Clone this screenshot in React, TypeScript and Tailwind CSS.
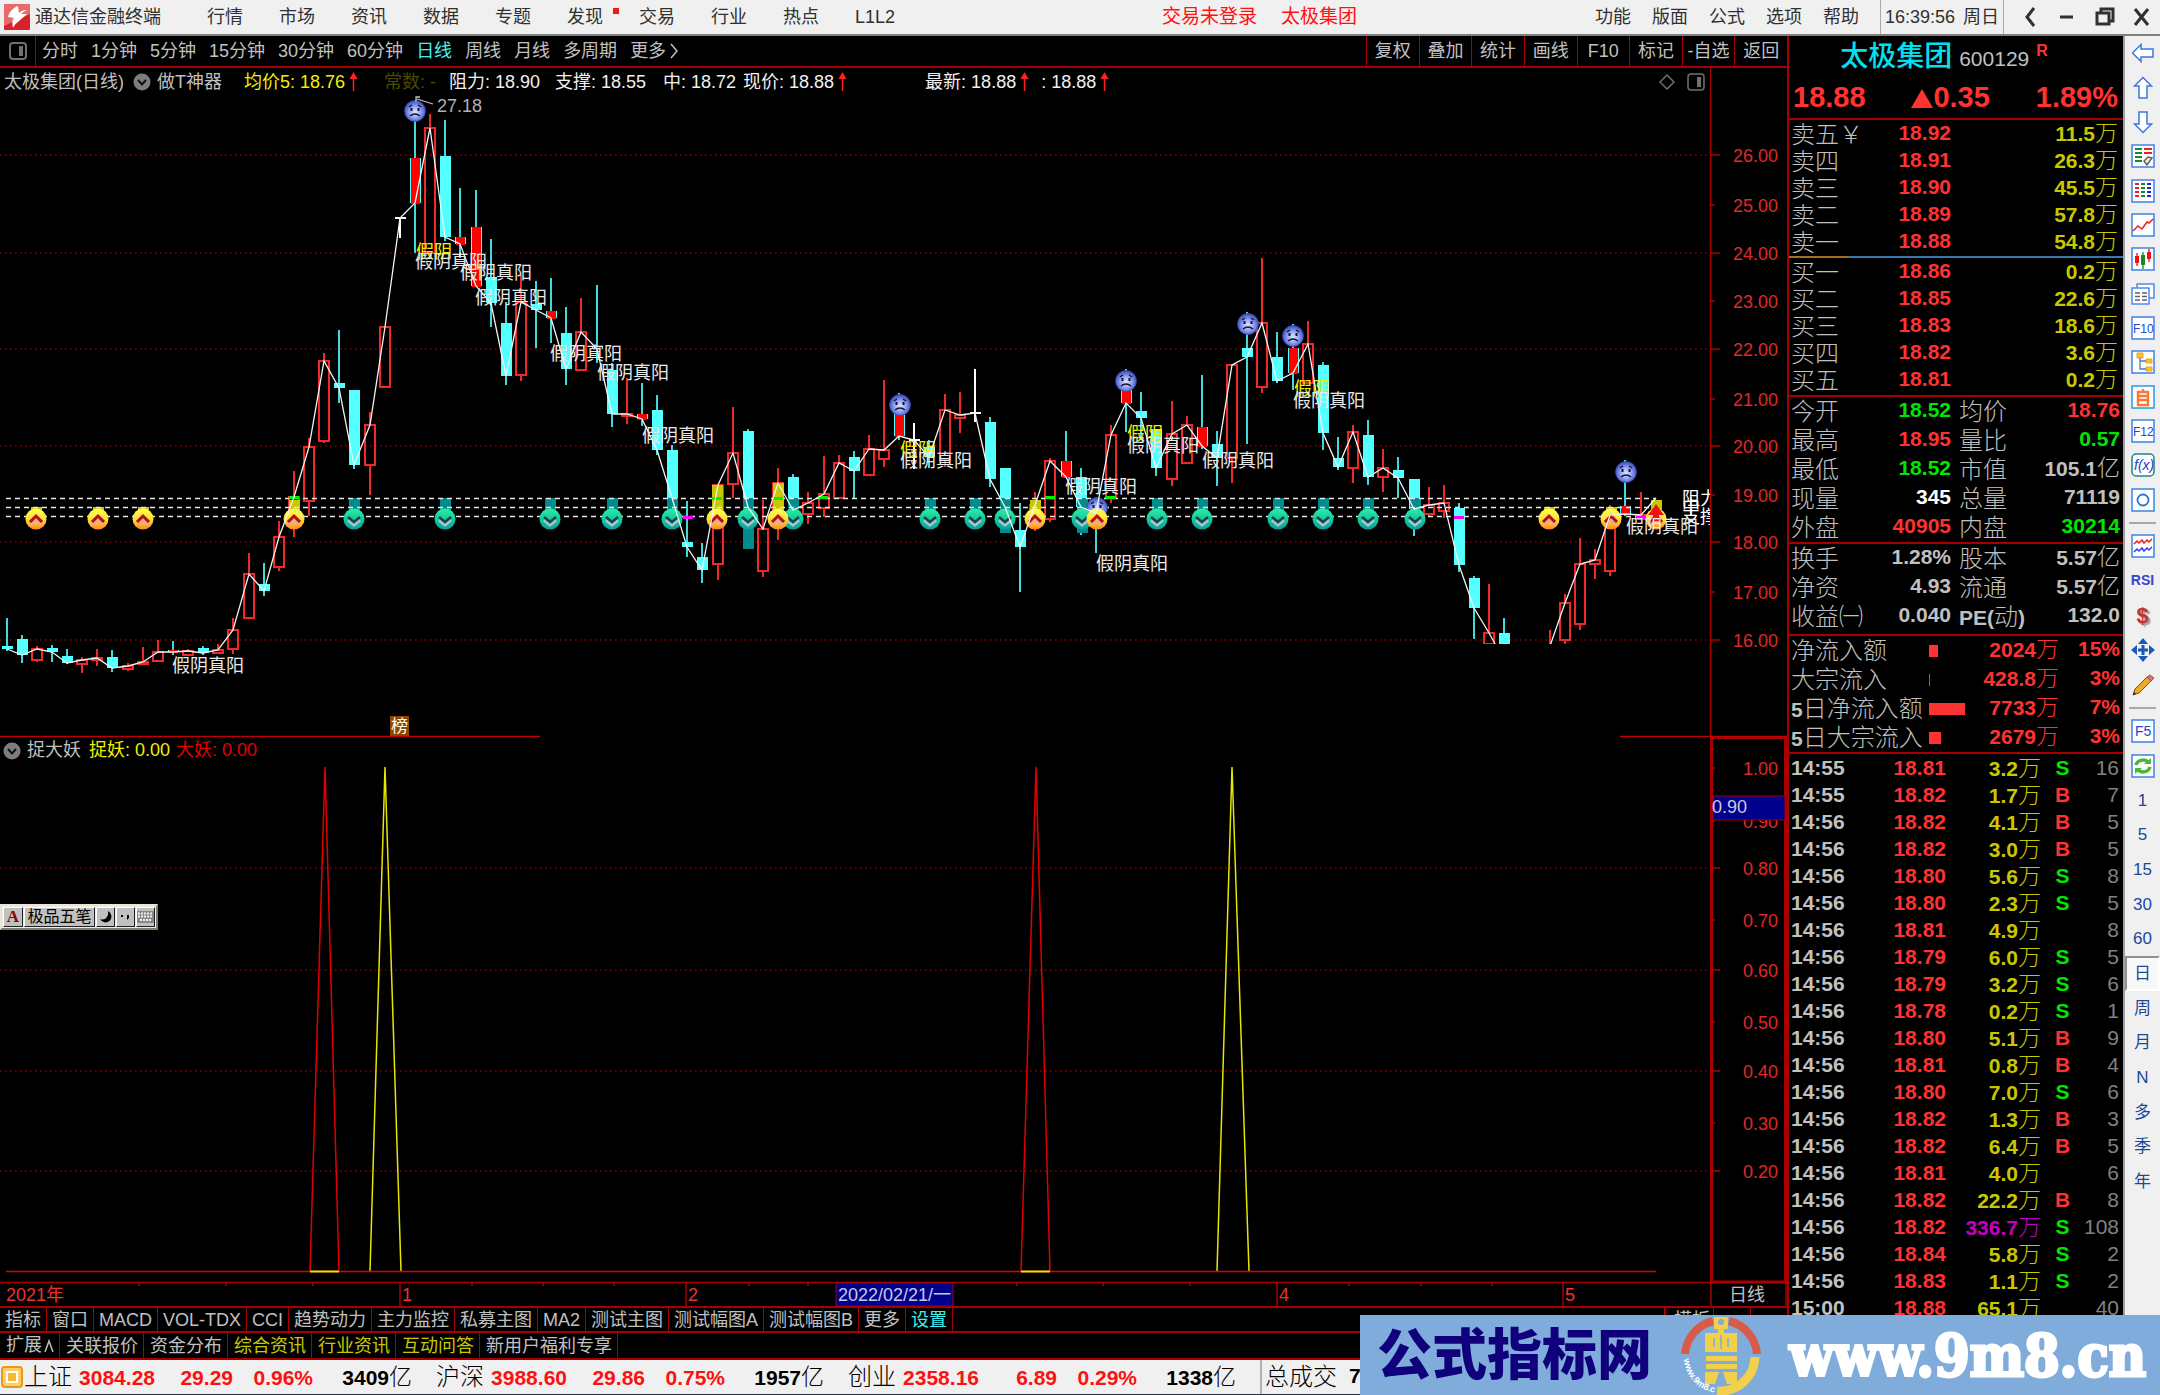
import type { ReactNode } from "react";

type Candle = [kind: string, high: number, top: number, bottom: number, low: number];

const STEP = 15.13;
const cx = (i: number) => Math.round(6.5 + i * STEP);

// r: hollow red, c: cyan, f: red body with cyan wicks, w: white, -: nothing
const candles: Candle[] = [
  ["c", 618, 646, 649, 651], ["c", 635, 639, 655, 663], ["r", 646, 649, 660, 662], ["c", 645, 648, 652, 662],
  ["c", 649, 656, 663, 664], ["r", 657, 660, 664, 673], ["r", 649, 658, 660, 666], ["c", 650, 657, 668, 672],
  ["r", 663, 666, 669, 671], ["r", 647, 662, 663, 664], ["r", 640, 652, 661, 661], ["f", 641, 650, 652, 655],
  ["r", 649, 651, 655, 656], ["c", 646, 648, 653, 655], ["r", 644, 650, 653, 654], ["r", 618, 630, 649, 654],
  ["r", 553, 574, 618, 618], ["c", 563, 584, 591, 596], ["r", 521, 537, 567, 571], ["r", 471, 497, 520, 537],
  ["r", 438, 447, 501, 516], ["r", 353, 361, 441, 443], ["c", 330, 383, 388, 403], ["c", 390, 390, 465, 469],
  ["r", 412, 425, 465, 495], ["r", 327, 327, 387, 387], ["w", 218, 218, 218, 238], ["f", 112, 158, 203, 253],
  ["r", 114, 128, 253, 253], ["c", 120, 156, 237, 241], ["f", 188, 237, 244, 258], ["f", 190, 227, 286, 286],
  ["c", 239, 277, 303, 327], ["c", 302, 323, 376, 385], ["r", 275, 302, 375, 381], ["c", 281, 304, 310, 348],
  ["f", 278, 311, 318, 343], ["c", 307, 333, 369, 385], ["r", 298, 332, 370, 370], ["f", 285, 346, 349, 363],
  ["c", 363, 370, 414, 427], ["r", 378, 414, 415, 424], ["f", 383, 414, 419, 426], ["c", 395, 410, 450, 455],
  ["c", 445, 450, 498, 523], ["c", 501, 542, 547, 557], ["c", 543, 557, 570, 583], ["r", 485, 485, 564, 580],
  ["r", 407, 453, 484, 498], ["c", 429, 431, 507, 549], ["r", 500, 529, 571, 577], ["r", 468, 483, 520, 540],
  ["c", 474, 477, 510, 510], ["r", 492, 503, 514, 524], ["r", 456, 494, 508, 517], ["r", 455, 463, 498, 499],
  ["c", 451, 457, 471, 498], ["r", 435, 449, 475, 475], ["r", 380, 450, 459, 467], ["f", 393, 413, 436, 440],
  ["w", 423, 440, 440, 469], ["c", 440, 447, 457, 468], ["r", 394, 410, 460, 467], ["r", 392, 415, 418, 433],
  ["w", 369, 413, 413, 422], ["c", 417, 422, 479, 487], ["c", 468, 468, 507, 533], ["c", 503, 530, 547, 592],
  ["r", 492, 505, 520, 531], ["r", 458, 461, 519, 522], ["f", 431, 461, 477, 477], ["c", 468, 477, 507, 535],
  ["c", 513, 513, 513, 553], ["r", 425, 435, 497, 503], ["f", 369, 387, 403, 432], ["c", 392, 411, 418, 440],
  ["c", 429, 429, 468, 476], ["r", 401, 434, 479, 486], ["r", 416, 425, 463, 464], ["f", 375, 427, 446, 449],
  ["c", 431, 444, 458, 486], ["r", 365, 365, 458, 483], ["c", 312, 348, 357, 444], ["r", 258, 323, 387, 393],
  ["c", 332, 357, 381, 383], ["f", 324, 348, 373, 390], ["r", 321, 344, 383, 383], ["c", 362, 365, 433, 450],
  ["c", 437, 458, 467, 470], ["r", 425, 432, 468, 483], ["c", 420, 435, 477, 485], ["r", 449, 468, 477, 492],
  ["c", 457, 470, 478, 498], ["c", 479, 479, 509, 536], ["r", 487, 505, 514, 516], ["r", 485, 503, 511, 518],
  ["c", 503, 508, 565, 572], ["c", 576, 578, 608, 639], ["r", 584, 633, 644, 644], ["c", 618, 633, 660, 660],
  ["-", 0, 0, 662, 0], ["-", 0, 0, 662, 0], ["r", 630, 646, 662, 662], ["r", 594, 603, 640, 644],
  ["r", 538, 564, 624, 630], ["r", 549, 560, 564, 579], ["r", 505, 515, 571, 576], ["f", 460, 506, 514, 516],
  ["r", 492, 515, 519, 519], ["-", 0, 0, 498, 0],
];

const closeLine = candles
  .map(([kind, , top, bottom], i) => `${cx(i)},${kind === "r" || kind === "w" ? top : bottom}`)
  .join(" ");

const buyMarks = [36, 98, 143, 294, 717, 778, 1035, 1097, 1549, 1611, 1656];
const sellMarks = [354, 445, 550, 612, 672, 748, 793, 930, 975, 1005, 1082, 1157, 1202, 1278, 1323, 1368, 1415];
const sadMarks = [[415, 111], [900, 405], [1126, 381], [1248, 324], [1293, 336], [1626, 472], [1097, 508]];
const fakeLabels = [
  [415, 261], [460, 272], [475, 297], [550, 353], [597, 372], [642, 435], [172, 665],
  [900, 460], [1065, 486], [1127, 445], [1202, 460], [1293, 400], [1096, 563], [1626, 526],
];
const yellowLabels = [[416, 251], [900, 449], [1127, 433], [1294, 388]];
// x, top, height, colour
const stubs: [number, number, number, string][] = [
  [294, 500, 12, "#c8c800"], [717, 485, 25, "#c8c800"], [778, 483, 27, "#c8c800"], [1035, 500, 12, "#c8c800"],
  [1656, 500, 12, "#c8c800"], [36, 507, 4, "#c8c800"], [98, 507, 4, "#c8c800"], [143, 507, 4, "#c8c800"],
  [1549, 507, 4, "#c8c800"], [1611, 507, 4, "#c8c800"],
  [748, 507, 42, "#008c8c"], [1005, 507, 26, "#008c8c"], [1082, 507, 26, "#008c8c"],
];
const flashes: [number, number, string][] = [
  [294, 497, "#00f000"], [717, 498, "#00f000"], [778, 498, "#00f000"], [823, 497, "#00f000"],
  [1050, 497, "#00f000"], [1111, 497, "#00f000"], [688, 517, "#ff00ff"], [1459, 517, "#ff00ff"], [1641, 517, "#ff00ff"],
];

const priceAxis: [string, number, boolean][] = [
  ["26.00", 155, true], ["25.00", 205, false], ["24.00", 253, true], ["23.00", 301, false],
  ["22.00", 349, true], ["21.00", 399, false], ["20.00", 446, true], ["19.00", 495, false],
  ["18.00", 542, true], ["17.00", 592, false], ["16.00", 640, true],
];
const subAxis: [string, number, boolean][] = [
  ["1.00", 768, false], ["0.90", 821, false], ["0.80", 868, true], ["0.70", 920, false], ["0.60", 970, true],
  ["0.50", 1022, false], ["0.40", 1071, true], ["0.30", 1123, false], ["0.20", 1171, true],
];
const spikes: [number, number, number, string][] = [
  [310, 325, 339, "#e00000"], [370, 385, 401, "#e6e600"], [1021, 1036, 1050, "#e00000"], [1217, 1232, 1249, "#e6e600"],
];
const dayTicks = [139, 226, 313, 472, 543, 614, 749, 808, 1017, 1103, 1190, 1349, 1421, 1492];
const monthTicks: [number, string][] = [[400, "1"], [686, "2"], [1277, "4"], [1563, "5"]];

const menus = ["行情", "市场", "资讯", "数据", "专题", "发现", "交易", "行业", "热点", "L1L2"];
const rightMenus = ["功能", "版面", "公式", "选项", "帮助"];
const periods = ["分时", "1分钟", "5分钟", "15分钟", "30分钟", "60分钟", "日线", "周线", "月线", "多周期"];
const tools = ["复权", "叠加", "统计", "画线", "F10", "标记", "-自选", "返回"];
const tabs = ["指标", "窗口", "MACD", "VOL-TDX", "CCI", "趋势动力", "主力监控", "私募主图", "MA2", "测试主图", "测试幅图A", "测试幅图B", "更多", "设置"];
const links = ["关联报价", "资金分布", "综合资讯", "行业资讯", "互动问答", "新用户福利专享"];

const asks = [["卖五￥", "18.92", "11.5万"], ["卖四", "18.91", "26.3万"], ["卖三", "18.90", "45.5万"], ["卖二", "18.89", "57.8万"], ["卖一", "18.88", "54.8万"]];
const bids = [["买一", "18.86", "0.2万"], ["买二", "18.85", "22.6万"], ["买三", "18.83", "18.6万"], ["买四", "18.82", "3.6万"], ["买五", "18.81", "0.2万"]];

const RED = "text-[#ff3232]";
const GREEN = "text-[#00e600]";
const GRAY = "text-[#c0c0c0]";
const stats = [
  ["今开", "18.52", GREEN, "均价", "18.76", RED],
  ["最高", "18.95", RED, "量比", "0.57", GREEN],
  ["最低", "18.52", GREEN, "市值", "105.1亿", GRAY],
  ["现量", "345", "text-white", "总量", "71119", GRAY],
  ["外盘", "40905", RED, "内盘", "30214", GREEN],
];
const stats2 = [
  ["换手", "1.28%", GRAY, "股本", "5.57亿", GRAY],
  ["净资", "4.93", GRAY, "流通", "5.57亿", GRAY],
  ["收益㈠", "0.040", GRAY, "PE(动)", "132.0", GRAY],
];
const flows: [string, number, string, string][] = [
  ["净流入额", 9, "2024万", "15%"], ["大宗流入", 1, "428.8万", "3%"],
  ["5日净流入额", 36, "7733万", "7%"], ["5日大宗流入", 12, "2679万", "3%"],
];
const ticks = `14:55 18.81 3.2万 S 16
14:55 18.82 1.7万 B 7
14:56 18.82 4.1万 B 5
14:56 18.82 3.0万 B 5
14:56 18.80 5.6万 S 8
14:56 18.80 2.3万 S 5
14:56 18.81 4.9万 - 8
14:56 18.79 6.0万 S 5
14:56 18.79 3.2万 S 6
14:56 18.78 0.2万 S 1
14:56 18.80 5.1万 B 9
14:56 18.81 0.8万 B 4
14:56 18.80 7.0万 S 6
14:56 18.82 1.3万 B 3
14:56 18.82 6.4万 B 5
14:56 18.81 4.0万 - 6
14:56 18.82 22.2万 B 8
14:56 18.82 336.7万 S 108
14:56 18.84 5.8万 S 2
14:56 18.83 1.1万 S 2
15:00 18.88 65.1万 - 40`.split("\n").map((l) => l.split(" "));

const indices = [
  ["上证", "3084.28", "29.29", "0.96%", "3409亿"],
  ["沪深", "3988.60", "29.86", "0.75%", "1957亿"],
  ["创业", "2358.16", "6.89", "0.29%", "1338亿"],
];

// bold figure followed by a lighter, larger unit
function Num({ v }: { v: string }) {
  const unit = /[万亿]$/.test(v) ? v.slice(-1) : "";
  return (
    <>
      <span className="text-[21px] leading-none font-bold">{unit ? v.slice(0, -1) : v}</span>
      {unit && <span className="text-[23px] leading-none font-light">{unit}</span>}
    </>
  );
}

function UpArrow() {
  return (
    <svg width="9" height="20" viewBox="0 0 9 20" className="shrink-0">
      <path d="M4.5 2V19" stroke="#ff2020" strokeWidth="1.5" />
      <path d="M4.5 0L8.5 7H.5Z" fill="#ff2020" />
    </svg>
  );
}

function Expander() {
  return (
    <svg width="18" height="18" viewBox="0 0 18 18" className="shrink-0">
      <circle cx="9" cy="9" r="8.500" fill="#7d7d7d" />
      <path d="M5 7l4 4.500 4-4.500" fill="none" stroke="#111" strokeWidth="2" />
    </svg>
  );
}

function TopBar() {
  return (
    <header className="flex h-9 items-center border-b-2 border-[#808080] bg-[#f0f0f0] text-[18px] text-[#303030]">
      <svg width="26" height="26" viewBox="0 0 26 26" className="ml-1 shrink-0">
        <rect width="26" height="26" rx="1" fill="#d8222a" />
        <path d="M0 0h26v10L0 22z" fill="#ea6a6c" />
        <path d="M14 2c-5 2-9 6-10 11l6 1c-2 2-2 6-1 10 2-5 8-8 14-14l-6 0c2-2 4-3 6-4-4 0-6 1-8 3z" fill="#fff" />
      </svg>
      <span className="ml-[5px]">通达信金融终端</span>
      <nav className="ml-[46px] flex gap-9">
        {menus.map((m) => (
          <button key={m} className="relative whitespace-nowrap">
            {m}
            {m === "发现" && <i className="absolute top-1 -right-4 h-[6px] w-[6px] bg-[#f01818]" />}
          </button>
        ))}
      </nav>
      <div className="ml-auto flex items-center">
        <div className="mr-[238px] flex gap-6 text-[19px] text-[#ff1010]">
          <button>交易未登录</button>
          <button>太极集团</button>
        </div>
        <nav className="flex gap-[21px] pr-[21px]">
          {rightMenus.map((m) => <button key={m}>{m}</button>)}
        </nav>
        <time className="flex h-[34px] items-center gap-2 border-x border-[#a8a8a8] px-1">
          <span>16:39:56</span><span>周日</span>
        </time>
        <svg width="156" height="34" viewBox="2004 0 156 34" fill="none" stroke="#303030" strokeWidth="3">
          <path d="M2034 8l-7 9 7 9M2060 17h13M2135 9l13 16M2148 9l-13 16" />
          <path d="M2097 13h12v11h-12zM2101 12v-3h12v12h-3" />
        </svg>
      </div>
    </header>
  );
}

function PeriodBar() {
  return (
    <div className="flex h-8 items-stretch border-b-2 border-[#a80000] text-[18px] text-[#c0c0c0]">
      <button aria-label="侧栏" className="flex w-9 items-center justify-center border-r border-[#a80000]">
        <svg width="18" height="18" viewBox="0 0 18 18" fill="none" stroke="#707070" strokeWidth="2">
          <rect x="1" y="1" width="16" height="16" rx="3" /><path d="M12 4v10" strokeWidth="4" />
        </svg>
      </button>
      <nav className="ml-[6px] flex items-center gap-[13px]">
        {periods.map((p) => (
          <button key={p} className={p === "日线" ? "text-[#40f0f0]" : ""}>{p}</button>
        ))}
        <button className="flex items-center gap-1">
          更多
          <svg width="8" height="16" viewBox="0 0 8 16" fill="none" stroke="#c0c0c0" strokeWidth="1.500"><path d="M1 1l6 7-6 7" /></svg>
        </button>
      </nav>
      <div className="ml-auto grid w-[421px] grid-cols-8">
        {tools.map((t) => (
          <button key={t} className="border-l border-[#a80000] whitespace-nowrap">{t}</button>
        ))}
      </div>
    </div>
  );
}

function ChartHeader() {
  return (
    <div className="flex h-7 items-stretch text-[18px] whitespace-nowrap text-[#f0f0f0]">
      <div className="flex flex-1 items-center pl-1">
        <span className="w-[129px] text-[#c0c0c0]">太极集团(日线)</span>
        <Expander />
        <span className="ml-[6px] w-[87px] text-[#c0c0c0]">做T神器</span>
        <span className="mr-1 text-[#f0f000]">均价5: 18.76</span>
        <UpArrow />
        <span className="ml-[26px] w-[65px] text-[#4a4a00]">常数: -</span>
        <span className="w-[106px]">阻力: 18.90</span>
        <span className="w-[108px]">支撑: 18.55</span>
        <span className="w-20">中: 18.72</span>
        <span className="mr-1">现价: 18.88</span>
        <UpArrow />
        <span className="mr-1 ml-[78px]">最新: 18.88</span>
        <UpArrow />
        <span className="mr-1 ml-3">: 18.88</span>
        <UpArrow />
        <svg width="46" height="18" viewBox="0 0 46 18" className="mr-[5px] ml-auto" fill="none" stroke="#707070" strokeWidth="1.500">
          <path d="M8 2l7 7-7 7-7-7z" /><rect x="29" y="1" width="16" height="16" rx="3" /><path d="M40 4v10" strokeWidth="4" />
        </svg>
      </div>
      <div className="w-[77px] border-l border-[#a80000]" />
    </div>
  );
}

function Sad({ x, y }: { x: number; y: number }) {
  return (
    <g transform={`translate(${x} ${y})`}>
      <circle r="10.500" fill="url(#sad)" stroke="#3848a8" strokeWidth=".8" />
      <path d="M-6-4l3-2M6-4l-3-2M-5 5q5-4 10 0" fill="none" stroke="#10142e" strokeWidth="1.400" />
      <path d="M-3.500-3v3M3.500-3v3" stroke="#10142e" strokeWidth="2" />
    </g>
  );
}

function Body({ c, i }: { c: Candle; i: number }) {
  const [kind, high, top, bottom, low] = c;
  const x = cx(i);
  const h = Math.max(bottom - top, 2);
  if (kind === "-") return null;
  if (kind === "w") return <path d={`M${x} ${high}V${low}M${x - 5} ${top}h11`} stroke="#fff" strokeWidth="1.500" fill="none" />;
  if (kind === "r")
    return (
      <g stroke="#f02828" strokeWidth="1.300" fill="none">
        <path d={`M${x} ${high}V${top}M${x} ${bottom}V${low}`} />
        <rect x={x - 5} y={top} width="10" height={h} />
      </g>
    );
  return (
    <g>
      <path d={`M${x} ${high}V${low}`} stroke="#40d8d8" strokeWidth="1.500" />
      <rect x={x - 5} y={top} width="11" height={h} fill="#54ffff" />
      {kind === "f" && <rect x={x - 4} y={top} width="9" height={h + 1} fill="#ff0000" />}
    </g>
  );
}

function PriceChart() {
  return (
    <svg viewBox="0 96 1787 641" className="block h-auto w-full" fontSize="18">
      <defs>
        <radialGradient id="sad" cx=".5" cy=".55"><stop offset="0" stopColor="#dfe4ff" /><stop offset=".5" stopColor="#9aa8f4" /><stop offset="1" stopColor="#4658c8" /></radialGradient>
        <linearGradient id="buy" x2="0" y2="1"><stop offset="0" stopColor="#ffff50" /><stop offset=".5" stopColor="#ffe040" /><stop offset="1" stopColor="#ff8a10" /></linearGradient>
        <linearGradient id="sell" x2="0" y2="1"><stop offset="0" stopColor="#28f0a0" /><stop offset="1" stopColor="#08a0a0" /></linearGradient>
        <clipPath id="plot"><path d="M0 96H1710V644H1440V737H0Z" /></clipPath>
        <clipPath id="wide"><rect x="0" y="96" width="1710" height="641" /></clipPath>
      </defs>
      {priceAxis.map(([label, y, major]) => (
        <g key={label}>
          {major && <path d={`M0 ${y}H1711`} stroke="#900000" strokeWidth="1.500" strokeDasharray="1.500 3.500" />}
          <path d={`M1711 ${y}h${major ? 9 : 4}`} stroke="#a80000" strokeWidth="1.500" />
          <text x="1778" y={y + 7} textAnchor="end" fill="#e02828">{label}</text>
        </g>
      ))}
      <path d="M1710.500 96V737" stroke="#a80000" strokeWidth="1.500" />
      <g clipPath="url(#plot)">
        <g shapeRendering="crispEdges">{candles.map((c, i) => <Body key={i} c={c} i={i} />)}</g>
      </g>
      <g clipPath="url(#wide)">
        {sellMarks.map((x) => <rect key={x} x={x - 5} y="498" width="11" height="14" fill="#008c8c" />)}
        {stubs.map(([x, y, h, fill]) => <rect key={`${x}`} x={x - 5} y={y} width="11" height={h} fill={fill} />)}
        <path d="M6 498.500H1656M6 507.500H1656M6 516.500H1656" stroke="#e8e8e8" strokeWidth="1.500" strokeDasharray="5 4" />
        {sadMarks.map(([x, y]) => <Sad key={x} x={x} y={y} />)}
        {sellMarks.map((x) => (
          <g key={x} transform={`translate(${x} 519)`}>
            <circle r="10.500" fill="url(#sell)" />
            <path d="M-6-1l6 5 6-5" fill="none" stroke="#a8c8c8" strokeWidth="3" transform="translate(0 2)" />
            <path d="M-6-2l6 5 6-5" fill="none" stroke="#104850" strokeWidth="2.600" />
          </g>
        ))}
        {buyMarks.map((x) => (
          <g key={x} transform={`translate(${x} 519)`}>
            <circle r="10.500" fill="url(#buy)" />
            <path d="M-6 4l6-5 6 5" fill="none" stroke="#f0a890" strokeWidth="3" transform="translate(0 2)" />
            <path d="M-6 3l6-6 6 6" fill="none" stroke="#b01010" strokeWidth="3" />
          </g>
        ))}
        {flashes.map(([x, y, fill]) => <rect key={x} x={x - 5} y={y - 1} width="10" height="3" fill={fill} />)}
        {yellowLabels.map(([x, y]) => <text key={x} x={x} y={y + 7} fill="#f0f000">假阴</text>)}
        <text x="1682" y="505" fill="#fff">阻力</text>
        <text x="1682" y="513" fill="#fff">中</text>
        <text x="1682" y="523" fill="#fff">支撑</text>
      </g>
      <polyline points={closeLine} fill="none" stroke="#f4f4f4" strokeWidth="1.300" clipPath="url(#plot)" />
      <path d="M1656 504l8 11h-5v6h-6v-6h-5z" fill="#f01010" />
      <g fill="#e8e8e8">
        {fakeLabels.map(([x, y]) => <text key={x} x={x} y={y + 7}>假阴真阳</text>)}
      </g>
      <path d="M420 97h-4v5M417 99l16 5" stroke="#c0c0c0" strokeWidth="1.300" fill="none" />
      <text x="437" y="112" fill="#b0b0b0">27.18</text>
      <rect x="390" y="716" width="19" height="20" fill="#8c4600" />
      <text x="391" y="732" fontSize="17" fill="#fff">榜</text>
      <path d="M0 736.500H540M1620 736.500H1787" stroke="#c00000" strokeWidth="1.500" />
    </svg>
  );
}

function SubHeader() {
  return (
    <div className="flex h-[27px] items-stretch text-[18px]">
      <div className="flex flex-1 items-center pl-[3px]">
        <Expander />
        <span className="ml-[6px] text-[#c0c0c0]">捉大妖</span>
        <span className="ml-2 text-[#f0f000]">捉妖: 0.00</span>
        <span className="ml-[6px] text-[#e00000]">大妖: 0.00</span>
      </div>
      <div className="w-[77px] border-x-3 border-t-2 border-[#a80000]" />
    </div>
  );
}

function SubChart() {
  return (
    <svg viewBox="0 764 1787 542" className="block h-auto w-full overflow-visible" fontSize="18">
      {subAxis.map(([label, y, major]) => (
        <g key={label}>
          {major && <path d={`M0 ${y}H1710`} stroke="#900000" strokeWidth="1.500" strokeDasharray="1.500 3.500" />}
          <path d={`M1711 ${y}h${major ? 9 : 4}`} stroke="#a80000" strokeWidth="1.500" />
          <text x="1778" y={y + 7} textAnchor="end" fill="#e02828">{label}</text>
        </g>
      ))}
      <path d="M1711.500 764V1282H1785.500V764" fill="none" stroke="#a80000" strokeWidth="3" />
      <rect x="1713" y="796" width="72" height="24" fill="#00008c" stroke="#a80000" />
      <text x="1712" y="813" fill="#c8c8e0">0.90</text>
      {spikes.map(([l, x, r, stroke]) => (
        <polyline key={x} points={`${l},1271 ${x},767 ${r},1271`} fill="none" stroke={stroke} strokeWidth="1.500" />
      ))}
      <path d="M6 1271.500H1656" stroke="#e00000" strokeWidth="1.500" />
      <path d="M310 1271.500h29M1021 1271.500h29" stroke="#e6e600" strokeWidth="2" />
      <path d="M0 1282.500H1787M1711 1282v24M1786 1282v24" stroke="#a80000" strokeWidth="1.500" />
      {dayTicks.map((x) => <path key={x} d={`M${x} 1282v4`} stroke="#a80000" strokeWidth="1.500" />)}
      {monthTicks.map(([x, label]) => (
        <g key={x}>
          <path d={`M${x} 1282v24`} stroke="#a80000" strokeWidth="1.500" />
          <text x={x + 2} y="1301" fill="#f03030">{label}</text>
        </g>
      ))}
      <text x="6" y="1301" fill="#f03030">2021年</text>
      <rect x="836" y="1283" width="117" height="23" fill="#00008c" stroke="#a80000" />
      <text x="838" y="1301" fill="#c8c8e0">2022/02/21/一</text>
      <text x="1729" y="1301" fill="#c0c0c0">日线</text>
    </svg>
  );
}

function BottomTabs() {
  return (
    <div className="text-[18px] whitespace-nowrap text-[#c0c0c0]">
      <div className="flex h-[25px] border-t-2 border-[#a80000]">
        {tabs.map((t) => (
          <button key={t} className={`border-r border-[#a80000] px-[5px] leading-[24px] ${t === "设置" ? "text-[#40f0f0]" : ""}`}>{t}</button>
        ))}
        <div className="ml-auto flex w-[123px]">
          <button className="w-[47px] flex-1 border-l-2 border-[#a80000] px-2 text-left leading-[24px]">模板</button>
          <button className="w-[37px] border-l border-[#a80000] leading-[24px]">+</button>
          <button className="w-[37px] border-l border-[#a80000] leading-[24px]">-</button>
        </div>
      </div>
      <div className="flex h-[29px] border-y-2 border-[#a80000]">
        <button className="flex items-center border-r border-[#a80000] pr-[5px] pl-[6px]">
          扩展
          <svg width="10" height="14" viewBox="0 0 10 14" fill="none" stroke="#c0c0c0" strokeWidth="1.500" className="ml-[2px]"><path d="M1 13L5 2l4 11" /></svg>
        </button>
        {links.map((t, i) => (
          <a key={t} href="#" className={`border-r border-[#a80000] pr-[5px] pl-[6px] leading-[26px] ${i > 1 && i < 5 ? "text-[#c8c800]" : ""}`}>{t}</a>
        ))}
      </div>
    </div>
  );
}

function Book({ rows }: { rows: string[][] }) {
  return (
    <div className="pt-px">
      <table className="w-full table-fixed">
        <tbody>
          {rows.map(([name, price, vol]) => (
            <tr key={name} className="h-[27px] leading-6">
              <th className="w-[90px] pl-[2px] text-left text-[24px] font-light whitespace-nowrap">{name}</th>
              <td className={`w-[72px] text-right ${RED}`}><Num v={price} /></td>
              <td className="pr-[5px] text-right text-[#c8c800]"><Num v={vol} /></td>
            </tr>
          ))}
        </tbody>
      </table>
    </div>
  );
}

function Stats({ rows }: { rows: string[][] }) {
  return (
    <table className="w-full table-fixed">
      <tbody>
        {rows.map(([a, av, ac, b, bv, bc]) => (
          <tr key={a} className="h-[29px] leading-6">
            <th className="w-[74px] pl-[2px] text-left text-[24px] font-light whitespace-nowrap">{a}</th>
            <td className={`w-[88px] text-right ${ac}`}><Num v={av} /></td>
            <th className="w-[80px] pl-2 text-left text-[24px] font-light whitespace-nowrap">
              {b.startsWith("PE") ? <><span className="text-[21px] leading-none font-bold">PE(</span>动<span className="text-[21px] leading-none font-bold">)</span></> : b}
            </th>
            <td className={`pr-[3px] text-right whitespace-nowrap ${bc}`}><Num v={bv} /></td>
          </tr>
        ))}
      </tbody>
    </table>
  );
}

function QuotePanel() {
  return (
    <aside className="w-[336px] shrink-0 border-l-2 border-[#a80000] text-[#c0c0c0]">
      <div className="h-[84px] border-b-2 border-[#a80000]">
        <div className="flex h-[42px] items-center justify-center gap-[7px] pr-6">
          <h1 className="text-[28px] font-medium text-[#00e0f0]">太极集团</h1>
          <span className="pt-1 text-[21px]">600129</span>
          <span className={`pb-3 text-[16px] font-bold ${RED}`}>R</span>
        </div>
        <div className={`flex h-10 items-center justify-between pr-[5px] pl-1 text-[29px] font-bold ${RED}`}>
          <span>18.88</span>
          <span className="flex items-center">
            <svg width="22" height="19" viewBox="0 0 22 19"><path d="M11 0L22 19H0Z" fill="#ff3232" /></svg>
            0.35
          </span>
          <span>1.89%</span>
        </div>
      </div>
      <Book rows={asks} />
      <div className="flex h-[2px]"><i className="w-[60px] bg-[#a07020]" /><i className="flex-1 bg-[#3878b0]" /></div>
      <Book rows={bids} />
      <div className="mt-px border-t-2 border-[#a80000]"><Stats rows={stats} /></div>
      <div className="border-t-2 border-[#a80000] pb-[3px]"><Stats rows={stats2} /></div>
      <div className="border-y-2 border-[#a80000]">
        <table className="w-full table-fixed">
          <tbody>
            {flows.map(([name, w, v, pct]) => (
              <tr key={name} className={`h-[29px] leading-6 ${RED}`}>
                <th className="w-[140px] pl-[2px] text-left text-[24px] font-light whitespace-nowrap text-[#c0c0c0]">
                  {name[0] === "5" ? <><span className="text-[21px] leading-none font-bold">5</span>{name.slice(1)}</> : name}
                </th>
                <td className="w-[40px]"><div className="h-3 bg-[#ff3232]" style={{ width: w }} /></td>
                <td className="text-right"><Num v={v} /></td>
                <td className="w-[64px] pr-[3px] text-right"><Num v={pct} /></td>
              </tr>
            ))}
          </tbody>
        </table>
      </div>
      <div className="pt-[2px]">
        <table className="w-full table-fixed">
          <tbody>
            {ticks.map(([time, price, vol, side, n], i) => (
              <tr key={i} className="h-[27px] leading-6">
                <td className="w-[80px] pl-[2px]"><Num v={time} /></td>
                <td className={`w-[77px] text-right ${RED}`}><Num v={price} /></td>
                <td className={`text-right ${vol === "336.7万" ? "text-[#c000c0]" : "text-[#c8c800]"}`}><Num v={vol} /></td>
                <td className={`w-[43px] text-center ${side === "S" ? GREEN : RED}`}>{side !== "-" && <Num v={side} />}</td>
                <td className="w-[39px] pr-1 text-right text-[#808080]"><span className="text-[21px] leading-none">{n}</span></td>
              </tr>
            ))}
          </tbody>
        </table>
      </div>
    </aside>
  );
}

function Box({ children, stroke = "#3c82e8" }: { children: ReactNode; stroke?: string }) {
  return (
    <svg width="24" height="24" viewBox="0 0 24 24" fill="none">
      <rect x="1" y="1" width="22" height="22" fill="#fff" stroke={stroke} strokeWidth="1.500" />
      {children}
    </svg>
  );
}

function Arrow({ turn }: { turn: number }) {
  return (
    <svg width="24" height="24" viewBox="0 0 24 24" fill="#fff" stroke="#3c78e0" strokeWidth="1.500">
      <path transform={`rotate(${turn} 12 12)`} d="M1.500 12L10 3.500v4.500h12v8H10v4.500z" />
    </svg>
  );
}

const iconsTop: [string, ReactNode][] = [
  ["后退", <Arrow turn={0} />],
  ["上翻", <Arrow turn={90} />],
  ["下翻", <Arrow turn={-90} />],
  ["报表", <Box><path d="M4 5h7M4 9h7M4 13h7M4 17h7" stroke="#18882c" strokeWidth="2" /><path d="M13 5h8M13 9h8" stroke="#f02020" strokeWidth="2" /><path d="M13 17l3 4 5-7-4-1z" fill="#eee" stroke="#606060" strokeWidth="1.500" /></Box>],
  ["行情", <Box><path d="M6 4v16" stroke="#f02020" strokeWidth="4" strokeDasharray="2 2" /><path d="M12 4v16" stroke="#18882c" strokeWidth="4" strokeDasharray="2 2" /><path d="M18 4v16" stroke="#2020e0" strokeWidth="4" strokeDasharray="2 2" /></Box>],
  ["分时图", <Box><path d="M2 18l5-5 4 3 5-7 2 1 4-4" stroke="#e82020" strokeWidth="1.500" /></Box>],
  ["K线图", <Box><path d="M6 6v13M18 2v13" stroke="#f01010" strokeWidth="1.300" /><path d="M4 9h4v7H4zM16 5h4v7h-4z" fill="#f01010" /><path d="M12 5v17" stroke="#18882c" strokeWidth="1.300" /><path d="M10 8h4v10h-4z" fill="#18882c" /></Box>],
  ["多窗口", <svg width="24" height="24" viewBox="0 0 24 24" fill="#fff" stroke="#4c8cf0" strokeWidth="1.500"><path d="M6 2h17v14H6z" /><path d="M1 6h17v16H1z" /><path d="M4 11h5M4 14.500h5M4 18h5M11 11h5M11 14.500h5M11 18h5" stroke="#606060" /></svg>],
  ["F10", <Box><text x="2" y="17" fontSize="12" fill="#2048d0">F10</text></Box>],
  ["树形", <Box><path d="M6 3h6v5H6zM15 9h6v4h-6zM15 17h6v4h-6z" fill="#ffc020" stroke="#e89818" strokeWidth=".8" /><path d="M9 8v11h6M9 11h6" stroke="#4878d0" strokeWidth="1.300" /></Box>],
  ["自选", <Box stroke="#2898e8"><path d="M12 4v3M7 7h10v13H7zM7 11h10M7 15h10" stroke="#f87838" strokeWidth="2.400" /></Box>],
  ["F12", <Box><text x="2" y="17" fontSize="12" fill="#2048d0">F12</text></Box>],
  ["公式", <svg width="24" height="24" viewBox="0 0 24 24"><rect x="1" y="1" width="22" height="22" rx="4" fill="#fff" stroke="#188888" strokeWidth="1.500" /><text x="3" y="17" fontSize="14" fontStyle="italic" fill="#2040d0">f(x)</text></svg>],
  ["圆", <Box><circle cx="12" cy="12" r="5.500" stroke="#2878d0" strokeWidth="1.800" /></Box>],
];

const iconsMid: [string, ReactNode][] = [
  ["指标线", <Box><path d="M3 10l3-3 2 2 3-3 2 3 3-3 2 2 3-3" stroke="#f02020" strokeWidth="1.500" /><path d="M3 18l3-3 2 2 3-3 2 3 3-3 2 2 3-3" stroke="#3040f0" strokeWidth="1.500" /></Box>],
  ["RSI", <span className="text-[14px] font-bold text-[#3448c8]">RSI</span>],
  ["资金", <span className="text-[22px] font-bold text-[#c83030] [text-shadow:2px_2px_1px_#999]">$</span>],
  ["移动", <svg width="24" height="24" viewBox="0 0 24 24" fill="#1858b8"><path d="M12 0l5 6H7zM12 24l5-6H7zM0 12l6-5v10zM24 12l-6-5v10z" /><path d="M12 7v10M7 12h10" stroke="#1858b8" strokeWidth="3" /></svg>],
  ["画线", <svg width="24" height="24" viewBox="0 0 24 24"><path d="M2 22l2-6L16 4l4 4L8 20z" fill="#f0a828" stroke="#805010" /><path d="M16 4l3-2 4 3-3 3z" fill="#e87070" stroke="#a05050" /><path d="M2 22l1-3 2 2z" fill="#222" /></svg>],
];

const periodKeys = ["1", "5", "15", "30", "60", "日", "周", "月", "N", "多", "季", "年"];

function SideTools() {
  return (
    <nav className="flex w-[37px] shrink-0 flex-col border-l-2 border-[#a0a0a0] bg-[#f0f0f0] text-[#1c4898]">
      <div className="grid h-[481px] auto-rows-fr">
        {iconsTop.map(([name, icon]) => <button key={name} aria-label={name} className="flex items-center justify-center">{icon}</button>)}
      </div>
      <hr className="mx-1 my-[5px] border-t-2 border-[#a8a8a8]" />
      <div className="grid h-[173px] auto-rows-fr">
        {iconsMid.map(([name, icon]) => <button key={name} aria-label={name} className="flex items-center justify-center">{icon}</button>)}
      </div>
      <hr className="mx-1 my-[5px] border-t-2 border-[#a8a8a8]" />
      <div className="grid h-[485px] auto-rows-fr text-[17px]">
        <button className="flex items-center justify-center" aria-label="F5"><Box><text x="4" y="17" fontSize="14" fill="#2048d0">F5</text></Box></button>
        <button className="flex items-center justify-center" aria-label="刷新">
          <Box><path d="M5 11a7 6 0 0 1 12-3M19 13a7 6 0 0 1-12 3" stroke="#48b838" strokeWidth="3.500" /><path d="M13 10h7V4zM11 14H4v6z" fill="#48b838" /></Box>
        </button>
        {periodKeys.map((k) => (
          <button key={k} className={k === "日" ? "border-2 border-t-[#909090] border-r-white border-b-white border-l-[#909090] bg-[#f8f8f8]" : ""}>{k}</button>
        ))}
      </div>
    </nav>
  );
}

function StatusBar() {
  return (
    <footer className="flex h-9 items-center border-b-2 border-[#203040] bg-[#f0f0f0] whitespace-nowrap text-black">
      <svg width="22" height="22" viewBox="0 0 22 22" className="mx-px shrink-0">
        <rect x="1" y="1" width="20" height="20" rx="3" fill="#ffd060" stroke="#e89820" strokeWidth="2" />
        <rect x="6" y="6" width="10" height="10" fill="#f8b830" stroke="#fff" strokeWidth="2" />
      </svg>
      {indices.map(([name, price, diff, pct, amount]) => (
        <div key={name} className="grid w-[412px] shrink-0 grid-cols-[48px_83px_78px_80px_99px] items-baseline text-right">
          <span className="text-[24px] leading-8 font-light">{name}</span>
          <span className="text-[#ff1010]"><Num v={price} /></span>
          <span className="text-[#ff1010]"><Num v={diff} /></span>
          <span className="text-[#ff1010]"><Num v={pct} /></span>
          <span><Num v={amount} /></span>
        </div>
      ))}
      <div className="flex h-full items-center gap-3 border-l-2 border-[#b0b0b0] pl-[3px]">
        <span className="text-[24px] font-light">总成交</span>
        <span><Num v="7572亿" /></span>
      </div>
    </footer>
  );
}

function ImeBar() {
  const cell = "flex h-5 items-center justify-center border border-t-white border-r-[#202020] border-b-[#202020] border-l-white bg-[#c0c0c0]";
  return (
    <div className="absolute top-[904px] left-0 flex gap-px border-2 border-t-[#e8e4d8] border-r-[#807c70] border-b-[#807c70] border-l-[#e8e4d8] bg-[#f0ece0] p-px text-black">
      <button className={`${cell} w-5 font-['Liberation_Serif'] text-[17px] font-bold text-[#900000]`}>A</button>
      <button className={`${cell} w-[71px] text-[16px]`}>极品五笔</button>
      <button className={`${cell} w-[19px]`} aria-label="半角">
        <svg width="14" height="14" viewBox="0 0 14 14"><path d="M9 1a6 6 0 1 1-8 8c5 2 9-2 8-8z" /></svg>
      </button>
      <button className={`${cell} w-[19px]`} aria-label="标点">
        <svg width="12" height="10" viewBox="0 0 12 10"><path d="M1 3h2v2H1zM7 3h2v3l-2 2v-3z" /></svg>
      </button>
      <button className={`${cell} w-[19px]`} aria-label="键盘">
        <svg width="17" height="12" viewBox="0 0 17 12"><path d="M0 0h17v12H0z" fill="#888" /><path d="M1 2.500h15M1 5.500h15M3 9h11" stroke="#f0f0f0" strokeWidth="2" strokeDasharray="2 1" /></svg>
      </button>
    </div>
  );
}

function SiteBanner() {
  return (
    <a href="#" className="absolute right-0 bottom-0 flex h-[81px] w-[800px] items-center justify-between bg-[#7facda] pr-[14px] pl-[17px] whitespace-nowrap">
      <span className="text-[55px] leading-none font-black text-[#10007c]">公式指标网</span>
      <svg width="80" height="80" viewBox="0 0 80 80" fill="none">
        <path d="M4 38A37 37 0 0 1 32 5M48 5A37 37 0 0 1 76 38" stroke="#d85a48" strokeWidth="8" />
        <path d="M74 41A35 35 0 0 1 36 75" stroke="#f0d04c" strokeWidth="9" />
        <path d="M33 1h14v12h-4v4h13v19H24V17h13v-4h-4z" fill="#f0d04c" />
        <circle cx="40" cy="6" r="3" fill="#7facda" />
        <path d="M25 40h31v5H25zM25 48h31v5H25zM24 56h14l-4 12H24zM42 56h14v12H46z" fill="#f0d04c" />
        <path d="M33 22v9M40 19v14M47 22v9" stroke="#7facda" strokeWidth="1.500" />
        <path id="ring" d="M3 43A37 37 0 0 0 36 77" />
        <text fontSize="9" fill="#fff" fontWeight="bold"><textPath href="#ring">www.9m8.cn</textPath></text>
      </svg>
      <span className="font-['DejaVu_Serif_Condensed','DejaVu_Serif',serif] text-[57px] leading-none font-bold text-white [-webkit-text-stroke:3px_white]">www.9m8.cn</span>
    </a>
  );
}

export default function App() {
  return (
    <div className="relative flex min-h-screen flex-col overflow-hidden bg-black font-['Liberation_Sans','Noto_Sans_CJK_SC',sans-serif]">
      <TopBar />
      <div className="flex flex-1">
        <main className="min-w-0 flex-1">
          <PeriodBar />
          <ChartHeader />
          <PriceChart />
          <SubHeader />
          <SubChart />
          <BottomTabs />
        </main>
        <QuotePanel />
        <SideTools />
      </div>
      <StatusBar />
      <ImeBar />
      <SiteBanner />
    </div>
  );
}
